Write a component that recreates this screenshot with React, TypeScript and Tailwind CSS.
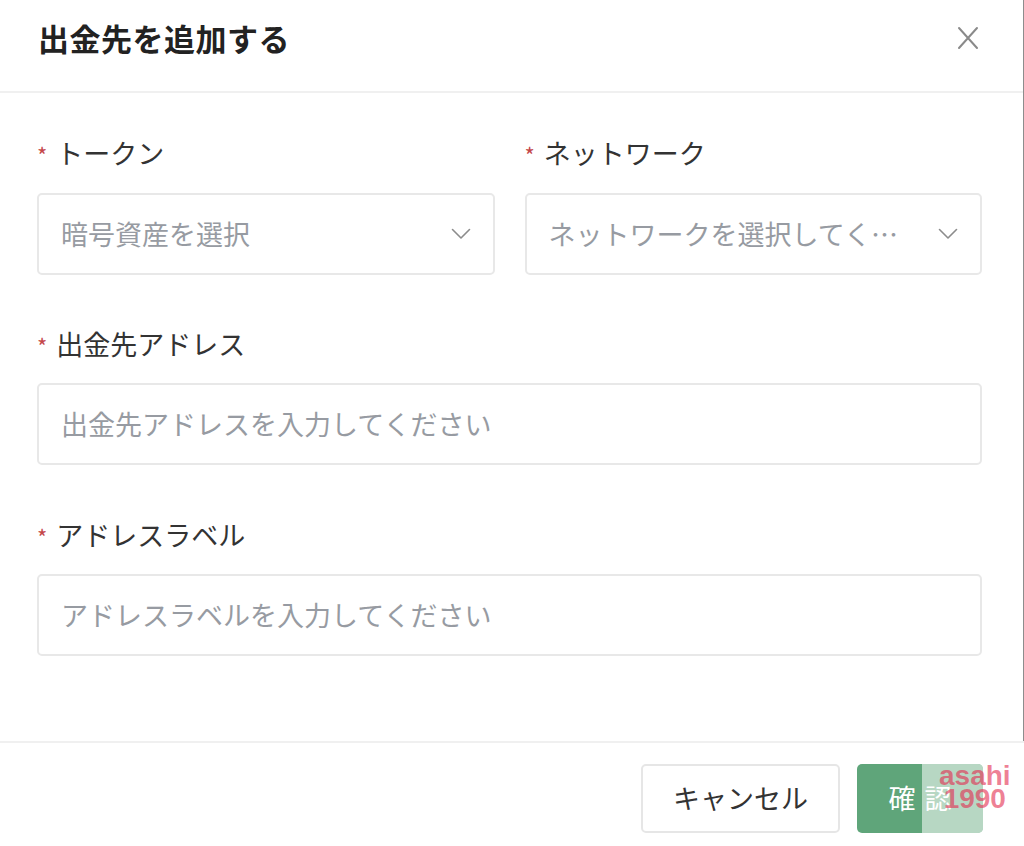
import React from "react";

const FONT = { fontFamily: '"Noto Sans CJK JP", "Noto Sans", sans-serif' };

function Chevron() {
  return (
    <svg width="20" height="12" viewBox="0 0 20 12" fill="none" className="shrink-0">
      <path d="M1.5 1.5 L10 10 L18.5 1.5" stroke="#8c8c8c" strokeWidth="1.6" strokeLinecap="round" strokeLinejoin="round" />
    </svg>
  );
}

function Label({ text }: { text: string }) {
  return (
    <div className="flex items-center h-[36px] text-[27px] leading-[36px] text-[#333333]">
      <span className="text-[#c4474a] text-[22px] leading-none mr-[9px] pt-[2px]">*</span>
      <span>{text}</span>
    </div>
  );
}

function Select({ placeholder }: { placeholder: string }) {
  return (
    <div className="flex items-center h-[82px] border-2 border-[#e8e8e8] rounded-[5px] bg-white pl-[22px] pr-[22px] gap-[22px]">
      <span className="flex-1 min-w-0 truncate text-[27px] text-[#979ba2]">{placeholder}</span>
      <Chevron />
    </div>
  );
}

function Input({ placeholder }: { placeholder: string }) {
  return (
    <div className="flex items-center h-[82px] border-2 border-[#e8e8e8] rounded-[5px] bg-white pl-[22px] pr-[22px]">
      <span className="truncate text-[27px] text-[#979ba2]">{placeholder}</span>
    </div>
  );
}

export default function App() {
  return (
    <div className="w-[1024px] h-[846px] bg-white overflow-hidden flex flex-col" style={FONT}>
      <div className="border-r border-[#8d8d8d] flex flex-col">
        {/* Header */}
        <div className="h-[93px] border-b-2 border-[#f0f0f0] flex items-start justify-between pl-[38px] pr-[44px] pt-[20px]">
          <div className="text-[31px] leading-[36px] font-bold text-[#222222] tracking-[0.5px]">出金先を追加する</div>
          <svg width="22" height="24" viewBox="0 0 22 24" fill="none" className="mt-[6px]">
            <path d="M2 2 L20 22 M20 2 L2 22" stroke="#8a8a8a" strokeWidth="2" strokeLinecap="round" />
          </svg>
        </div>
        {/* Body */}
        <div className="h-[648px] pl-[37px] pr-[41px] pt-[42px] flex flex-col">
          <div className="grid grid-cols-2 gap-[30px]">
            <div className="flex flex-col gap-[22px]">
              <Label text="トークン" />
              <Select placeholder="暗号資産を選択" />
            </div>
            <div className="flex flex-col gap-[22px]">
              <Label text="ネットワーク" />
              <Select placeholder="ネットワークを選択してください" />
            </div>
          </div>
          <div className="flex flex-col gap-[21px] mt-[51px]">
            <Label text="出金先アドレス" />
            <Input placeholder="出金先アドレスを入力してください" />
          </div>
          <div className="flex flex-col gap-[21px] mt-[52px]">
            <Label text="アドレスラベル" />
            <Input placeholder="アドレスラベルを入力してください" />
          </div>
        </div>
      </div>
      {/* Footer */}
      <div className="border-t-2 border-[#f0f0f0] flex justify-end gap-[17px] pr-[41px] pt-[21px] relative">
        <div className="w-[199px] h-[69px] border-2 border-[#e6e6e6] rounded-[5px] flex items-center justify-center text-[27px] text-[#333333] bg-white">
          キャンセル
        </div>
        <div className="relative w-[126px] h-[69px] rounded-[5px] bg-[#5fa57a] overflow-hidden flex items-center justify-center text-[27px] text-white tracking-[9px] pl-[9px]">
          <div className="absolute right-0 top-0 h-full w-[61px] bg-white/55"></div>
          <span className="relative">確認</span>
        </div>
        <div
          className="absolute left-[939px] top-[21px] flex flex-col items-center text-[28px] leading-[23px] font-black text-[#e32b4e]/60"
          style={{ fontFamily: '"Liberation Sans", "DejaVu Sans", sans-serif' }}
        >
          <span>asahi</span>
          <span>1990</span>
        </div>
      </div>
    </div>
  );
}
